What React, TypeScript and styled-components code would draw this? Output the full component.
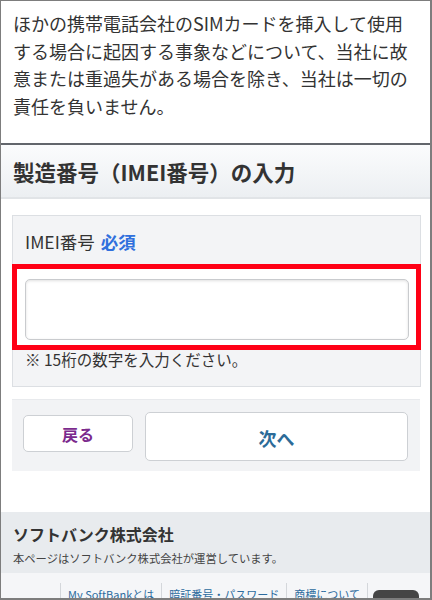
import React from "react";
import styled, { createGlobalStyle } from "styled-components";

const Global = createGlobalStyle`
  html, body { margin: 0; padding: 0; background: #ffffff; }
  * { box-sizing: border-box; }
  body { font-family: "Noto Sans CJK JP", "Noto Sans", sans-serif; color: #333; }
`;

const Frame = styled.div`
  width: 432px;
  height: 600px;
  overflow: hidden;
  border-style: solid;
  border-color: #7d7d7d;
  border-width: 1px 2px 2px 1px;
  background: #fff;
`;

const Notice = styled.p`
  margin: 0;
  padding: 9px 10px 23px 12px;
  font-size: 18px;
  line-height: 27.5px;
  color: #333;
`;

const SectionHeader = styled.h2`
  margin: 0;
  height: 56px;
  border-top: 2px solid #62666c;
  border-bottom: 2px solid #e1e4e7;
  background: linear-gradient(#fbfcfd, #eceff2);
  display: flex;
  align-items: center;
  padding: 0 12px;
  font-size: 21.5px;
  font-weight: 700;
  color: #333;
`;

const Body = styled.div`
  padding: 16px 10px 0 11px;
  display: flex;
  flex-direction: column;
`;

const FieldBox = styled.div`
  border: 1px solid #dcdfe3;
  background: #f3f4f6;
  display: flex;
  flex-direction: column;
  margin-right: -1px;
`;

const Label = styled.div`
  padding: 14px 12px 0;
  height: 48px;
  font-size: 17.5px;
  line-height: 24px;
  color: #333;
`;

const Required = styled.span`
  color: #3070dd;
  font-weight: 700;
  margin-left: 6px;
`;

const Highlight = styled.div`
  margin: 0 0 0 -1px;
  width: 409px;
  border: 5px solid #ff0015;
  background: #fff;
  padding: 10px 7px 5px 8px;
`;

const TextInput = styled.input`
  display: block;
  width: 100%;
  height: 61px;
  border: 1px solid #c9cbce;
  border-radius: 5px;
  box-shadow: inset 0 1px 3px rgba(0, 0, 0, 0.12);
  background: #fff;
  font-size: 18px;
  padding: 0 10px;
  outline: none;
`;

const Note = styled.div`
  padding: 0 12px 18px;
  font-size: 15.5px;
  line-height: 18px;
  color: #333;
`;

const ButtonBar = styled.div`
  margin-top: 12px;
  height: 72px;
  background: #f2f3f5;
  border-top: 1px solid #e8eaed;
  display: flex;
  align-items: center;
  gap: 12px;
  padding: 0 12px 0 11px;
`;

const Button = styled.button<{ $wide?: boolean }>`
  height: ${(p) => (p.$wide ? "49px" : "37px")};
  width: ${(p) => (p.$wide ? "263px" : "110px")};
  flex: none;
  margin-top: ${(p) => (p.$wide ? "2px" : "-4px")};
  border: 1px solid #cdd0d4;
  border-radius: 5px;
  background: #fff;
  font-family: "Noto Sans CJK JP", sans-serif;
  font-weight: 700;
  font-size: ${(p) => (p.$wide ? "18px" : "16px")};
  color: ${(p) => (p.$wide ? "#2c6b98" : "#7b2a8d")};
  padding: 0;
  padding-top: ${(p) => (p.$wide ? "2px" : "0")};
`;

const Spacer = styled.div`
  height: 41px;
`;

const Footer = styled.footer`
  background: #e8ebee;
  padding: 12px 12px 7px;
  display: flex;
  flex-direction: column;
  gap: 6px;
`;

const FooterTitle = styled.div`
  font-size: 16px;
  font-weight: 700;
  line-height: 20px;
  color: #333;
`;

const FooterText = styled.div`
  font-size: 11.3px;
  line-height: 16px;
  color: #444;
`;

const LinkRow = styled.div`
  height: 40px;
  background: #f5f6f8;
  display: flex;
  align-items: flex-start;
  padding: 10px 0 0 59px;
`;

const LinkItem = styled.a`
  border-left: 1px solid #d4d7db;
  padding: 3px 7px 0 7px;
  font-size: 11px;
  line-height: 16px;
  color: #2c6b9e;
  text-decoration: none;
  white-space: nowrap;
  &:last-of-type {
    border-right: 1px solid #d4d7db;
  }
`;

const DarkTab = styled.div`
  margin-left: 5px;
  margin-top: 7px;
  width: 46px;
  height: 20px;
  flex: none;
  border-radius: 6px 6px 0 0;
  background: #454545;
`;

export default function App() {
  return (
    <>
      <Global />
      <Frame>
        <Notice>
          ほかの携帯電話会社のSIMカードを挿入して使用する場合に起因する事象などについて、当社に故意または重過失がある場合を除き、当社は一切の責任を負いません。
        </Notice>
        <SectionHeader>製造番号（IMEI番号）の入力</SectionHeader>
        <Body>
          <FieldBox>
            <Label>
              IMEI番号<Required>必須</Required>
            </Label>
            <Highlight>
              <TextInput type="text" inputMode="numeric" />
            </Highlight>
            <Note>※ 15桁の数字を入力ください。</Note>
          </FieldBox>
          <ButtonBar>
            <Button>戻る</Button>
            <Button $wide>次へ</Button>
          </ButtonBar>
        </Body>
        <Spacer />
        <Footer>
          <FooterTitle>ソフトバンク株式会社</FooterTitle>
          <FooterText>本ページはソフトバンク株式会社が運営しています。</FooterText>
        </Footer>
        <LinkRow>
          <LinkItem href="#">My SoftBankとは</LinkItem>
          <LinkItem href="#">暗証番号・パスワード</LinkItem>
          <LinkItem href="#">商標について</LinkItem>
          <DarkTab />
        </LinkRow>
      </Frame>
    </>
  );
}
